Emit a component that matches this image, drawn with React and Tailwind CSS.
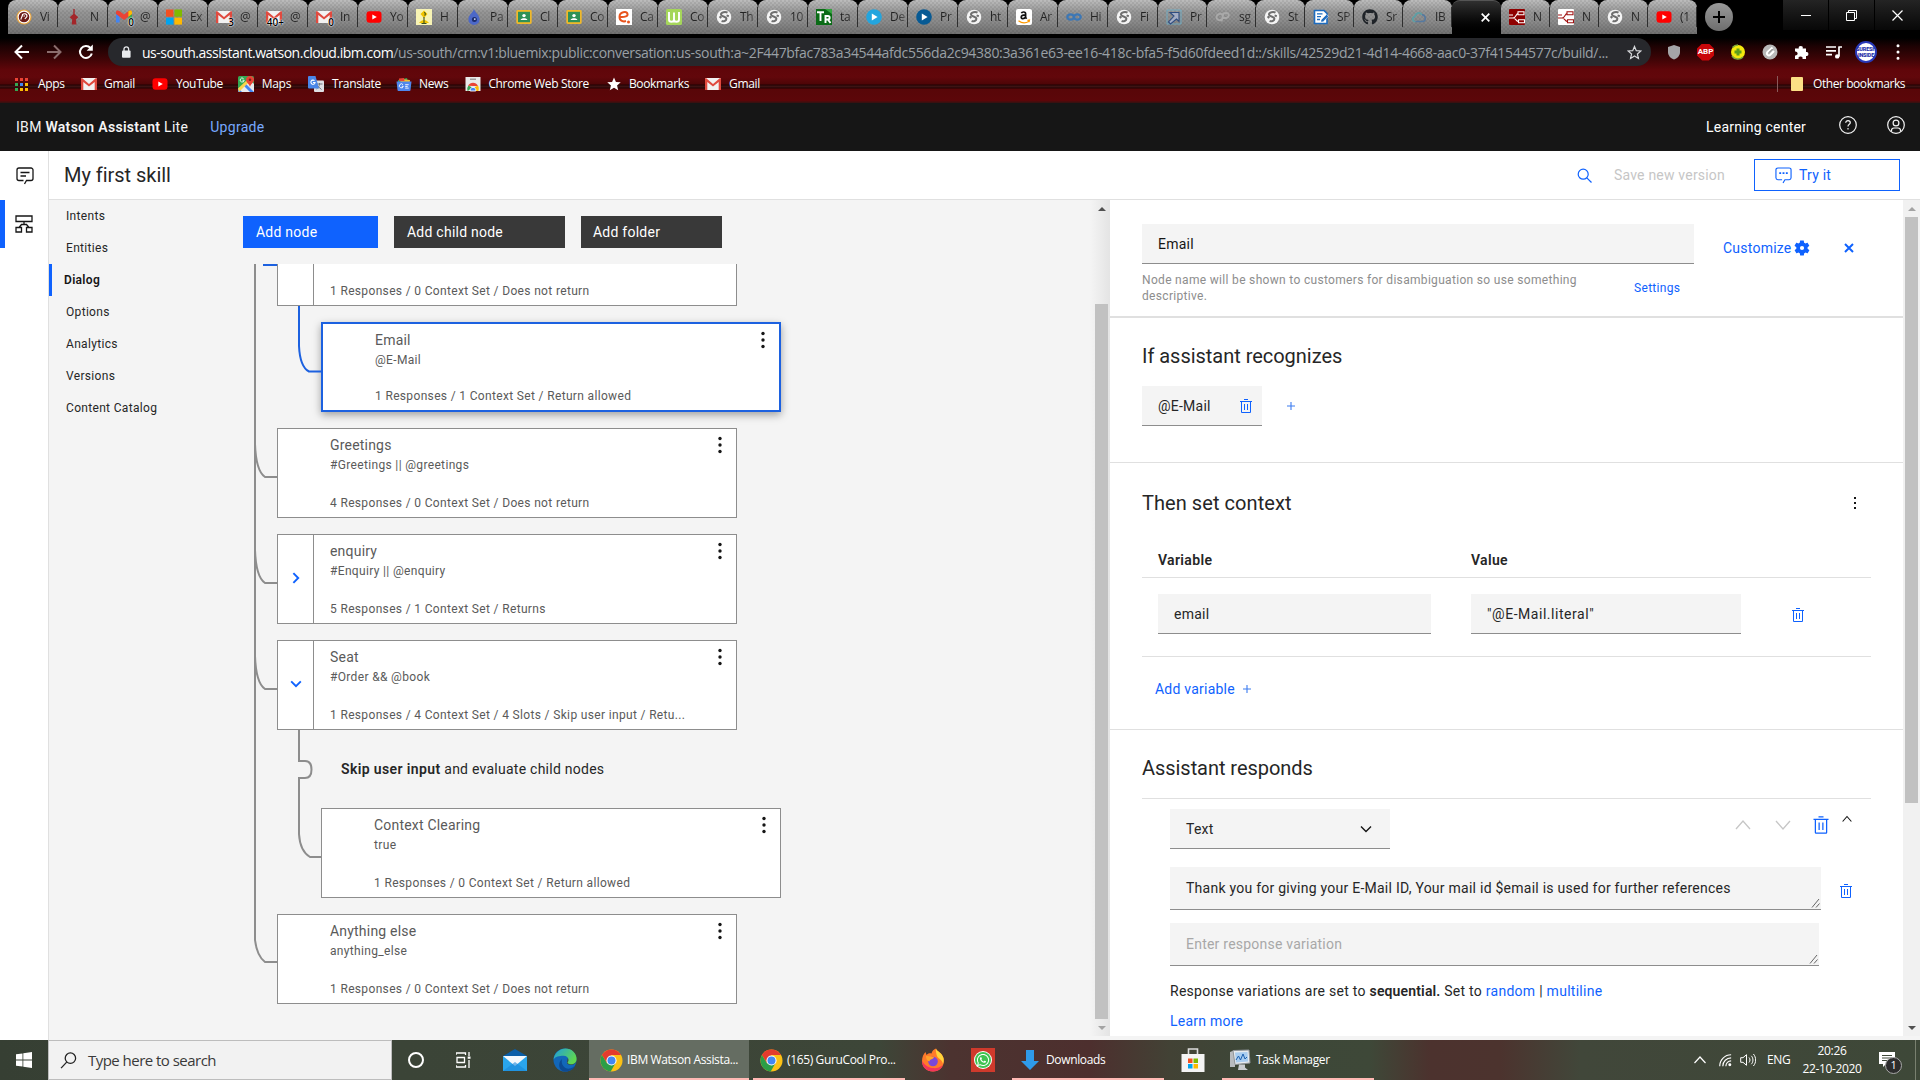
import React from "react";
import { FaGithub, FaWhatsapp } from "react-icons/fa";

/* ---------- favicons ---------- */

const Ico = ({ children, size = 16, box = "0 0 16 16", className = "" }) => (
  <svg width={size} height={size} viewBox={box} className={`shrink-0 ${className}`} fill="none">
    {children}
  </svg>
);

const YouTube = () => (
  <Ico>
    <rect x="0.5" y="2.2" width="15" height="11.6" rx="3" fill="#f00" />
    <path d="M6.3 5.5 L10.8 8 L6.3 10.5Z" fill="#fff" />
  </Ico>
);
const Gmail = () => (
  <Ico>
    <rect x="0" y="2" width="16" height="12" rx="1" fill="#f2f2f2" />
    <path d="M0 3a1 1 0 0 1 1-1l7 6 7-6a1 1 0 0 1 1 1v11h-2.3V6L8 10.6 2.3 6v8H0Z" fill="#e04a3f" />
  </Ico>
);
const GmailColor = () => (
  <Ico>
    <path d="M0 3v10.5h3.6V7Z" fill="#4285f4" />
    <path d="M16 3v10.5h-3.6V7Z" fill="#34a853" />
    <path d="M0 3.2C0 1.5 2 .9 3.4 2L8 5.6 12.6 2c1.4-1.1 3.4-.5 3.4 1.2V5L8 11 0 5Z" fill="#ea4335" />
    <path d="M12.4 2.2c1.6-1.2 3.6-.7 3.6 1V5l-3.6 2.7Z" fill="#fbbc04" />
  </Ico>
);
const Badge = ({ text, children }) => (
  <span className="relative flex">
    {children}
    <span className="absolute right-[-2px] bottom-[-3px] text-[10px] leading-[11px] font-semibold text-black [text-shadow:0_0_2px_#fff,0_0_1px_#fff,0_0_1px_#fff]">
      {text}
    </span>
  </span>
);
const Globe = () => (
  <Ico>
    <circle cx="8" cy="8" r="7.3" fill="#f4f4f4" />
    <path d="M11.5 3.6C9.6 2.4 5 3 5 5.4c0 2.4 5.4 1.8 5.4 4.4 0 2.2-3 3-4.8 2.2M5.2 9.2 3.6 7.4M10.6 6.4l2.2.8" stroke="#6f6f6f" strokeWidth="2" />
  </Ico>
);
const Classroom = () => (
  <Ico>
    <rect x="0.3" y="1" width="15.4" height="14" rx="1.4" fill="#f0b92a" />
    <rect x="2" y="2.8" width="12" height="10.4" fill="#2f9157" />
    <circle cx="8" cy="6.6" r="1.7" fill="#fff" />
    <path d="M4.6 11c.3-2.4 6.5-2.4 6.8 0Z" fill="#fff" />
  </Ico>
);
const Microsoft = () => (
  <Ico>
    <path fill="#f25022" d="M0 .5h7.4v7.2H0z" />
    <path fill="#7fba00" d="M8.4.5H16v7.2H8.4z" />
    <path fill="#00a4ef" d="M0 8.6h7.4v7H0z" />
    <path fill="#ffb900" d="M8.4 8.6H16v7H8.4z" />
  </Ico>
);
const Prosper = () => (
  <Ico>
    <circle cx="8" cy="8" r="7.6" fill="#e8a33b" />
    <circle cx="8" cy="8" r="6.4" fill="#fff" />
    <circle cx="8" cy="8" r="5.3" fill="#6d1c18" />
    <path d="M5 10.5c0-2.500 1.500-2.500 1.500-5 2-1.500 4.500-.5 4.500 1.500 0 1.500-1.500 1.500-2 3M7.500 7h1.500" stroke="#fff" strokeWidth="1.200" />
  </Ico>
);
const Guitar = () => (
  <Ico>
    <path d="M7.3 0h1.4v5l3.6 3.2-2.4 2.4.6 5H5.7l.5-5-2.5-2.4L7.3 5Z" fill="#a3262a" />
  </Ico>
);
const Yellow = () => (
  <Ico>
    <rect width="16" height="16" fill="#f7f3b4" />
    <path d="M8 1.500 11.500 5 8 9 4.500 5Z M3 14c3-4 7-4 10 0Z" fill="#f2c400" />
    <path d="M8 3.500c1.600 0 1.800 1.800.6 3M8 8v6M5.500 14.500h5" stroke="#38511f" strokeWidth="1.100" />
  </Ico>
);
const Drop = () => (
  <Ico>
    <path d="M8 0c1.5 4 5.6 6.2 5.6 10.2A5.6 5.6 0 0 1 8 16a5.6 5.6 0 0 1-5.6-5.8C2.400 6.200 6.500 4 8 0Z" fill="#4c68c8" />
    <circle cx="8.400" cy="10.500" r="2.500" fill="#1c2c6c" />
    <circle cx="8.800" cy="10.100" r="0.900" fill="#dfe6ff" />
  </Ico>
);
const Ece = () => (
  <Ico>
    <rect width="16" height="16" fill="#fff" />
    <path d="M3.500 8c6 .5 8.500-1 8-3C10.800 2 3.500 2.500 3.500 8c0 4 4 5 6.500 4" stroke="#e8541e" strokeWidth="2" />
    <circle cx="12.500" cy="13" r="1.500" fill="#e8541e" />
  </Ico>
);
const Green = () => (
  <Ico>
    <rect width="16" height="16" rx="1.500" fill="#a5d65a" />
    <path d="M3 3v7.500c0 3 5 3 5 0V3.500v7c0 3 5 3 5 0V3" stroke="#fff" strokeWidth="1.900" />
  </Ico>
);
const Tr = () => (
  <Ico>
    <rect width="16" height="16" fill="#0a6b16" />
    <path d="M9 0h7v5z" fill="#35a53f" />
    <path d="M1 3.200h7M4.500 3v9M9.500 14V7h2.500c2.200 0 2.200 3.500 0 3.500H10M12 10.500 14.500 14" stroke="#fff" strokeWidth="1.900" />
  </Ico>
);
const Play = ({ fill }) => (
  <Ico>
    <circle cx="8" cy="8" r="7.800" fill={fill} />
    <path d="M5.800 4.500 11.600 8l-5.800 3.500Z" fill="#fff" />
  </Ico>
);
const Amazon = () => (
  <Ico>
    <rect width="16" height="16" rx="2" fill="#fff" />
    <path d="M5.400 4.300C6 2.500 9.600 2.500 9.600 4.800v3.700l1 1.200M9.400 5.900c-3 0-4.200.8-4.200 2.300 0 2.100 3.300 2 4.200-.2" stroke="#111" strokeWidth="1.700" />
    <path d="M2.500 11.800c3.300 2.500 7.500 2.500 10.600.4M11.400 11.300l2-.2-.4 2" stroke="#f90" strokeWidth="1.300" />
  </Ico>
);
const Infinity = () => (
  <Ico>
    <ellipse cx="4.600" cy="8" rx="3.300" ry="2.700" stroke="#3c77b5" strokeWidth="2.300" />
    <ellipse cx="11.400" cy="8" rx="3.300" ry="2.700" stroke="#3c77b5" strokeWidth="2.300" />
  </Ico>
);
const Share = () => (
  <Ico>
    <path d="M1 1h14v14H1Z" stroke="#69b3cf" strokeWidth="0.800" />
    <path d="M4 3.500h9v9L10.500 10l-6 5-2-2 5.500-6Z" fill="#a4adc4" stroke="#2f4d80" strokeWidth="1.100" />
  </Ico>
);
const Cp = () => (
  <Ico>
    <path d="M7.500 6c-1.500-2-5.600-1.400-6 2-.3 2.800 3 4 5 2.300M6.500 12.500 8.500 4M8.500 4.500c3-1 5.500-.4 5.300 1.900-.2 2.500-3 2.900-5.500 2.400" stroke="#a9a9a9" strokeWidth="1.900" />
  </Ico>
);
const Docs = () => (
  <Ico>
    <path d="M1.500 1.500h9.500l3 3v10H1.500z" fill="#fff" stroke="#1d6cc0" strokeWidth="1.600" />
    <path d="M4 4.800h5.500M4 7.600h4M4 10.500h3" stroke="#1d6cc0" strokeWidth="1.300" />
    <path d="M8 11 13.500 5.500l2 1.800-5.300 5.400-2.200.5Z" fill="#1d6cc0" stroke="#fff" strokeWidth="0.500" />
  </Ico>
);
const Cloud = () => (
  <Ico>
    <path d="M4.500 12.500C1 12.500.8 8 4 7.500 4.500 3.500 9.500 2.800 11 6" stroke="#5c9fa5" strokeWidth="1.700" />
    <path d="M11 6c4-.5 4.500 6.500.5 6.500h-7" stroke="#56799f" strokeWidth="1.700" />
  </Ico>
);
const NodeRed = ({ bg, fg }) => (
  <Ico>
    <rect width="16" height="16" rx="1" fill={bg} />
    <path d="M0 9h4c3 0 3-4.500 5-4.500M4 9c3 0 3 3.500 5.500 3.500M9 2.800h6v3H9zM9.500 10.800h6v3h-6zM0 6h4" stroke={fg} strokeWidth="1.100" />
  </Ico>
);

const TABS = [
  [<Prosper />, "Vi"],
  [<Guitar />, "N"],
  [<Badge text="0"><GmailColor /></Badge>, "@"],
  [<Microsoft />, "Ex"],
  [<Badge text="3"><Gmail /></Badge>, "@"],
  [<Badge text="40+"><Gmail /></Badge>, "@"],
  [<Badge text="0"><Gmail /></Badge>, "In"],
  [<YouTube />, "Yo"],
  [<Yellow />, "H"],
  [<Drop />, "Pa"],
  [<Classroom />, "Cl"],
  [<Classroom />, "Co"],
  [<Ece />, "Ca"],
  [<Green />, "Co"],
  [<Globe />, "Th"],
  [<Globe />, "10"],
  [<Tr />, "ta"],
  [<Play fill="#23a5de" />, "De"],
  [<Play fill="#075a94" />, "Pr"],
  [<Globe />, "ht"],
  [<Amazon />, "Ar"],
  [<Infinity />, "Hi"],
  [<Globe />, "Fi"],
  [<Share />, "Pr"],
  [<Cp />, "sg"],
  [<Globe />, "St"],
  [<Docs />, "SP"],
  [<FaGithub size={16} color="#1f2328" className="shrink-0" />, "Sr"],
  [<Cloud />, "IB"],
];
const TABS_AFTER = [
  [<NodeRed bg="#8f0000" fg="#fff" />, "N"],
  [<NodeRed bg="#fff" fg="#a01010" />, "N"],
  [<Globe />, "N"],
  [<YouTube />, "(1"],
];

function Tab({ icon, label, narrow }) {
  return (
    <div
      className={`${narrow ? "w-[49px]" : "w-[50px]"} flex h-[34px] shrink-0 items-center rounded-t-lg bg-[repeating-conic-gradient(#00000012_0_25%,transparent_0_50%),linear-gradient(#bdbdbd,#969696_35%,#8a8a8a_65%,#707070)] bg-[size:4px_4px,100%_100%] pl-2`}
    >
      {icon}
      <span className="ml-2 w-[17px] overflow-hidden whitespace-nowrap bg-gradient-to-r from-[#1c1c1c] via-[#2b2b2b] to-[#6a6a6a] bg-clip-text text-[12px] leading-4 tracking-[-0.3px] text-transparent">
        {label}
      </span>
      <span className="ml-auto h-5 w-px bg-[#2e2e2e]" />
    </div>
  );
}

/* ---------- browser chrome ---------- */

const BOOKMARKS = [
  { label: "Gmail", ml: "ml-[16px]", gap: "ml-[7px]", icon: <Gmail /> },
  { label: "YouTube", ml: "ml-[17px]", gap: "ml-[8px]", icon: <YouTube /> },
  {
    label: "Maps", ml: "ml-[15px]", gap: "ml-[8px]",
    icon: (
      <Ico>
        <rect width="16" height="16" rx="1.500" fill="#34a853" />
        <path d="M0 16 12 4l4 4v8Z" fill="#e8eaed" />
        <path d="M0 12 4 16H1a1 1 0 0 1-1-1ZM8 8l8 8h-4L6 10Z" fill="#4285f4" />
        <path d="M0 12.500 9 4l2 2L1 16Z" fill="#fbd34c" />
        <path d="M12 0c2.400 0 4 1.700 4 3.800 0 2.500-2.700 3.500-4 7-1.300-3.500-4-4.500-4-7C8 1.700 9.600 0 12 0Z" fill="#ea4335" />
        <circle cx="12" cy="3.800" r="1.300" fill="#7a1f18" />
        <path d="M5.500 2.500a2 2 0 1 0 .7 1.700H4.500" stroke="#fff" strokeWidth="0.900" />
      </Ico>
    ),
  },
  {
    label: "Translate", ml: "ml-[17px]", gap: "ml-[8px]",
    icon: (
      <Ico>
        <rect x="6" y="4.500" width="10" height="11.500" rx="1" fill="#dfe1e5" />
        <path d="M8.500 8h6M11.500 7v1c0 2-1.500 4-3 5M9.500 10l4 3.500" stroke="#6f7680" />
        <path d="M1 0h6.500L11 12.500H1a1 1 0 0 1-1-1V1a1 1 0 0 1 1-1Z" fill="#4a86e8" />
        <path d="M6.500 4.700a2.100 2.100 0 1 0 .6 1.800H5" stroke="#fff" strokeWidth="1.100" />
      </Ico>
    ),
  },
  {
    label: "News", ml: "ml-[15px]", gap: "ml-[7px]",
    icon: (
      <Ico>
        <path d="M2 4 11 2l1 4H2Z" fill="#2e9e57" />
        <path d="m5 3 9 1-.5 4H4Z" fill="#f6c02c" />
        <path d="m3 2.500 5-.5.500 3H3Z" fill="#ea4335" />
        <path d="M0.500 5.500h15L14.500 14a1 1 0 0 1-1 1h-11a1 1 0 0 1-1-1Z" fill="#4f86ec" />
        <path d="M7 8.700a2 2 0 1 0 .3 1.600H5.800M9.200 8.700h3.500M9.200 10.400h2.500M9.200 12.100h3.500" stroke="#fff" strokeWidth="0.900" />
      </Ico>
    ),
  },
  {
    label: "Chrome Web Store", ml: "ml-[17px]", gap: "ml-[7px]",
    icon: (
      <Ico>
        <path d="M0.500 1h15v14h-15z" fill="#e9e9e9" />
        <path d="M5 2.500h6v1.500H5z" fill="#9d9d9d" />
        <path d="M2.500 15a5.500 5.500 0 0 1 1-5.500L8 12Z" fill="#35a853" />
        <path d="M3 9.800c2.200-4 8-4 10 .2H8Z" fill="#ea4335" />
        <path d="M13 9.500c.9 1.500 1 4 .3 5.500H8l2-4Z" fill="#fbbc05" />
        <path d="M5.200 15a2.900 2.900 0 1 1 5.600 0Z" fill="#4285f4" stroke="#fff" strokeWidth="0.900" />
      </Ico>
    ),
  },
  {
    label: "Bookmarks", ml: "ml-[18px]", gap: "ml-[8px]",
    icon: (
      <Ico size={14}>
        <path d="m8 .5 2.200 5.100 5.500.5-4.200 3.600 1.300 5.400L8 12.200l-4.800 2.900 1.300-5.400L.3 6.100l5.500-.5Z" fill="#fff" />
      </Ico>
    ),
  },
  { label: "Gmail", ml: "ml-[16px]", gap: "ml-[8px]", icon: <Gmail /> },
];

const APP_DOTS = ["#ea4335", "#ea4335", "#ea4335", "#34a853", "#4285f4", "#fbbc04", "#34a853", "#fbbc04", "#fbbc04"];

function BrowserChrome() {
  return (
    <header className="h-[103px] shrink-0 bg-[linear-gradient(#000_0px,#000_38px,#1c0203_46px,#3b0406_58px,#60060a_70px,#62070b_77px,#4e0507_84px,#1e0102_85px,#3d1313_86px,#3d1313_87px,#1e0102_88px,#580608_89px,#5c0609_101px,#3a1010_102px)] font-['Open_Sans',sans-serif]">
      <div className="flex h-[34px] pl-2">
        {TABS.map(([icon, label], i) => (
          <Tab key={i} icon={icon} label={label} narrow={i > 22} />
        ))}
        <div className="flex h-[38px] w-[49px] items-center rounded-t-lg border-t border-[#555] bg-gradient-to-b from-[#303030] to-black pb-1 pl-[29px]">
          <Ico size={9} box="0 0 9 9">
            <path d="m.7.7 7.600 7.600M8.300.7.700 8.300" stroke="#fff" strokeWidth="1.700" />
          </Ico>
        </div>
        {TABS_AFTER.map(([icon, label], i) => (
          <Tab key={i} icon={icon} label={label} narrow />
        ))}
        <div className="mt-[3px] ml-[8px] flex size-7 items-center justify-center rounded-full bg-gradient-to-b from-[#9a9a9a] to-[#6e6e6e]">
          <Ico size={12} box="0 0 12 12">
            <path d="M6 0v12M0 6h12" stroke="#000" strokeWidth="2" />
          </Ico>
        </div>
        <div className="ml-auto flex h-[30px] w-[137px] gap-px">
          <div className="flex flex-1 items-center justify-center bg-gradient-to-b from-[#242424] to-[#080808]">
            <span className="h-px w-[10px] bg-white" />
          </div>
          <div className="flex flex-1 items-center justify-center bg-gradient-to-b from-[#242424] to-[#080808]">
            <Ico size={11} box="0 0 11 11">
              <path d="M.5 2.500h8v8h-8zM2.500 2.500v-2h8v8h-2" stroke="#fff" />
            </Ico>
          </div>
          <div className="flex flex-1 items-center justify-center bg-gradient-to-b from-[#242424] to-[#080808]">
            <Ico size={11} box="0 0 11 11">
              <path d="m.5.5 10 10M10.500.5l-10 10" stroke="#fff" strokeWidth="1.200" />
            </Ico>
          </div>
        </div>
      </div>

      <div className="mt-1 flex h-7 items-center">
        <Ico size={16} className="ml-[14px]">
          <path d="M15 8H2M8 1.500 1.500 8 8 14.500" stroke="#fff" strokeWidth="2" />
        </Ico>
        <Ico size={16} className="ml-4">
          <path d="M1 8h13M8 1.500 14.500 8 8 14.500" stroke="#8b6d6d" strokeWidth="2" />
        </Ico>
        <Ico size={16} className="ml-4">
          <path d="M13.800 9.500A6 6 0 1 1 12.500 4" stroke="#fff" strokeWidth="2" />
          <path d="M14.800.5v6.200H8.600Z" fill="#fff" />
        </Ico>
        <div className="ml-[14px] flex h-7 w-[1543px] items-center rounded-full bg-[#27282c]">
          <Ico size={12} box="0 0 12 12" className="ml-3">
            <rect x="2" y="4.600" width="8.600" height="7.200" rx="1" fill="#e8eaed" />
            <path d="M4 5V3.100a2.300 2.300 0 0 1 4.600 0V5" stroke="#e8eaed" strokeWidth="1.300" />
          </Ico>
          <span className="ml-[10px] text-[14px] whitespace-nowrap tracking-[-0.465px] text-white">
            us-south.assistant.watson.cloud.ibm.com
          </span>
          <span className="text-[14px] whitespace-nowrap tracking-[-0.335px] text-[#9aa0a6]">
            /us-south/crn:v1:bluemix:public:conversation:us-south:a~2F447bfac783a34544afdc556da2c94380:3a361e63-ee16-418c-bfa5-f5d60fdeed1d::/skills/42529d21-4d14-4668-aac0-37f41544577c/build/...
          </span>
          <Ico size={15} className="mr-[9px] ml-auto">
            <path d="m8 1.500 1.900 4.500 4.900.4-3.700 3.200 1.100 4.800L8 11.800l-4.200 2.600 1.100-4.800L1.200 6.400 6.100 6Z" stroke="#d5d7da" strokeWidth="1.300" />
          </Ico>
        </div>
        <Ico className="ml-[15px]">
          <path d="M8 1 14 3v5c0 4-3 6.500-6 7.500C5 14.500 2 12 2 8V3Z" fill="#a5a5a8" />
        </Ico>
        <span className="ml-[15px] flex size-[17px] items-center justify-center bg-[#c9070a] font-['Roboto'] text-[8px] font-bold text-white [clip-path:polygon(30%_0,70%_0,100%_30%,100%_70%,70%_100%,30%_100%,0_70%,0_30%)]">
          ABP
        </span>
        <Ico className="ml-4">
          <circle cx="8" cy="8" r="7" fill="#f3e90e" />
          <path d="M2 12A7.200 7.200 0 0 0 13 13M2.500 3.500A7 7 0 0 1 8 .9" stroke="#7da63c" strokeWidth="1.500" />
          <path d="M8 4.500v7M4.500 8h7" stroke="#5d9e1c" strokeWidth="3" />
        </Ico>
        <Ico className="ml-4">
          <circle cx="8" cy="8" r="7.500" fill="#b9b9b9" />
          <path d="M10.500 3.500 5.500 8c-2 2.200 1 4.500 2.800 2.800L12 7" stroke="#fff" strokeWidth="2" />
          <path d="M10.500 5 7 8.500" stroke="#7b7b7b" />
        </Ico>
        <Ico className="ml-4">
          <path d="M1 4.500h3.800a2 2 0 1 1 3.900 0H12v3.600a2 2 0 1 1 0 3.900v3H8.500a2 2 0 1 0-3.900 0H1v-3.600a2 2 0 1 0 0-3.800Z" fill="#fff" />
        </Ico>
        <Ico className="ml-4">
          <path d="M0 3h10M0 6.800h10M0 10.600h6M13 3v9.500M12.300 3H16" stroke="#fff" strokeWidth="1.700" />
          <circle cx="11.200" cy="12.400" r="2.200" fill="#fff" />
        </Ico>
        <span className="ml-[13px] flex size-[22px] items-center justify-center rounded-full border-2 border-[#2838b8] bg-white">
          <span className="text-center font-['Roboto'] text-[5.500px] leading-[6px] font-black tracking-[-0.2px] text-[#1f2fa8]">
            SURESH
            <br />
            INSIDE
          </span>
        </span>
        <Ico className="ml-[13px]">
          <path d="M8 1.800h0M8 8h0M8 14.200h0" stroke="#fff" strokeWidth="3" strokeLinecap="round" />
        </Ico>
      </div>

      <div className="flex h-9 items-center text-[12px] tracking-[-0.34px] text-white">
        <div className="ml-[15px] grid grid-cols-3 gap-[2px]">
          {APP_DOTS.map((c, i) => (
            <span key={i} className="size-[3px]" style={{ backgroundColor: c }} />
          ))}
        </div>
        <span className="ml-[10px] w-[27px]">Apps</span>
        {BOOKMARKS.map((b, i) => (
          <span key={i} className={`flex items-center whitespace-nowrap ${b.ml}`}>
            {b.icon}
            <span className={b.gap}>{b.label}</span>
          </span>
        ))}
        <span className="ml-auto h-4 w-px bg-[#8a5a5b]" />
        <span className="ml-[13px] h-[14px] w-3 rounded-[1px] bg-[#fbdf85]" />
        <span className="mr-[14px] ml-[10px] w-[93px] whitespace-nowrap tracking-[-0.43px]">Other bookmarks</span>
      </div>
    </header>
  );
}

/* ---------- shared app pieces ---------- */

const Trash = ({ size = 16, className = "" }) => (
  <svg width={size} height={size} viewBox="0 0 32 32" fill="#0f62fe" className={`shrink-0 ${className}`}>
    <path d="M12 12h2v12h-2zM18 12h2v12h-2z" />
    <path d="M4 6v2h2v20a2 2 0 0 0 2 2h16a2 2 0 0 0 2-2V8h2V6Zm4 22V8h16v20ZM12 2h8v2h-8z" />
  </svg>
);
const Plus = () => (
  <Ico size={8} box="0 0 8 8">
    <path d="M4 0v8M0 4h8" stroke="#3d7cf0" strokeWidth="1.100" />
  </Ico>
);
const Chev = ({ d, color, size = 16, w = 1.400, className = "" }) => (
  <Ico size={size} className={className}>
    <path d={d} stroke={color} strokeWidth={w} />
  </Ico>
);
const Kebab = ({ className = "" }) => (
  <svg width="6" height="20" viewBox="0 0 6 20" className={className} fill="#161616">
    <circle cx="3" cy="3.500" r="1.700" />
    <circle cx="3" cy="10" r="1.700" />
    <circle cx="3" cy="16.500" r="1.700" />
  </svg>
);
const Grip = () => (
  <svg width="9" height="10" viewBox="0 0 9 10" className="mb-px ml-auto self-end" stroke="#555" strokeWidth="0.900">
    <path d="M1 9.500 8 1M5 9.500 8.500 5.500" />
  </svg>
);
const ScrollBar = ({ top, thumb, up, down, className = "" }) => (
  <div className={`flex shrink-0 flex-col items-center ${className}`}>
    <div className="flex h-[17px] items-center">
      <Ico size={8} box="0 0 8 8"><path d="M0 6 4 2l4 4Z" fill={up} /></Ico>
    </div>
    <div className={`w-[13px] bg-[#c1c1c1] ${top} ${thumb}`} />
    <div className="mt-auto flex h-[17px] items-center">
      <Ico size={8} box="0 0 8 8"><path d="M0 2l4 4 4-4Z" fill={down} /></Ico>
    </div>
  </div>
);

/* ---------- dialog tree ---------- */

function Node({ title, cond, meta, toggle, child, selected }) {
  return (
    <div
      className={`flex h-[90px] w-[460px] shrink-0 bg-white ${child ? "ml-[78px]" : "ml-[34px]"} ${
        selected ? "border-2 border-[#1c61e0] shadow-[0_3px_8px_rgba(0,0,0,0.35)]" : "border border-[#8d8d8d]"
      }`}
    >
      <div className={`flex w-9 shrink-0 items-center justify-center pb-[3px] ${toggle ? "border-r border-[#8d8d8d]" : ""}`}>
        {toggle === "right" && <Chev size={14} d="m5 2.500 5.500 5.500-5.500 5.500" color="#0f62fe" w={2.200} />}
        {toggle === "down" && <Chev size={14} d="m2.500 5 5.500 5.500 5.500-5.500" color="#0f62fe" w={2.200} />}
      </div>
      <div className="flex-1 pt-1.5 pl-4 text-[12px] leading-5 tracking-[0.34px] text-[#5a5a5a]">
        <div className="text-[14px] tracking-[0.2px]">{title}</div>
        <div>{cond}</div>
        <div className={selected ? "mt-4" : "mt-[18px]"}>{meta}</div>
      </div>
      <Kebab className={`mt-1.5 ${selected ? "mr-[13px]" : "mr-[13.500px]"}`} />
    </div>
  );
}

function DialogTree() {
  return (
    <div className="relative flex h-[776px] flex-col gap-4 overflow-hidden">
      <svg className="absolute top-0 left-0" width="90" height="776" fill="none" stroke="#8d8d8d" strokeWidth="2">
        <path d="M12 0V676Q14 692 22 698H34" />
        <path d="M12 180Q13 207 22 213H34M12 286Q13 313 22 319H34M12 392Q13 419 22 425H34" />
        <path d="M56 466V497H62Q68.500 497 68.500 505.500Q68.500 514 62 514H56V570Q57 587 67 593H78" />
        <path d="M20 0.500H34" stroke="#1c61e0" strokeWidth="3" />
        <path d="M56 42V82Q57 103 66 107.500H78" stroke="#1c61e0" />
      </svg>
      <div className="ml-[34px] flex h-[42px] w-[460px] shrink-0 border border-t-0 border-[#8d8d8d] bg-white">
        <div className="w-9 border-r border-[#8d8d8d]" />
        <div className="pt-[17px] pl-4 text-[12px] leading-5 tracking-[0.34px] text-[#5a5a5a]">
          1 Responses / 0 Context Set / Does not return
        </div>
      </div>
      <Node child selected title="Email" cond="@E-Mail" meta="1 Responses / 1 Context Set / Return allowed" />
      <Node title="Greetings" cond="#Greetings || @greetings" meta="4 Responses / 0 Context Set / Does not return" />
      <Node toggle="right" title="enquiry" cond="#Enquiry || @enquiry" meta="5 Responses / 1 Context Set / Returns" />
      <Node toggle="down" title="Seat" cond="#Order && @book" meta="1 Responses / 4 Context Set / 4 Slots / Skip user input / Retu..." />
      <div className="ml-[98px] h-[46px] text-[14px] leading-[46px] tracking-[0.25px]">
        <b className="font-semibold tracking-[0.38px]">Skip user input</b> and evaluate child nodes
      </div>
      <Node child title="Context Clearing" cond="true" meta="1 Responses / 0 Context Set / Return allowed" />
      <Node title="Anything else" cond="anything_else" meta="1 Responses / 0 Context Set / Does not return" />
    </div>
  );
}

/* ---------- node editor ---------- */

const field = "flex items-center border-b border-[#8d8d8d] bg-[#f4f4f4] px-4 pt-px";

function Editor() {
  return (
    <div className="h-[836px] w-[793px] shrink-0 bg-white text-[14px] tracking-[0.23px]">
      <section className="h-[118px] border-b-2 border-[#e0e0e0] px-8 pt-6">
        <div className="flex text-[#0f62fe]">
          <div className={`${field} h-10 w-[552px] text-[#161616]`}>Email</div>
          <div className="mt-2 ml-[29px] flex h-8 items-center">
            <span className="w-[68px]">Customize</span>
            <svg width="18" height="18" viewBox="0 0 24 24" className="ml-[2px]" fill="#0f62fe">
              <path d="M19.400 13c0-.3.100-.6.100-1s0-.7-.1-1l2.100-1.600c.2-.2.300-.4.100-.7l-2-3.400c-.1-.2-.4-.3-.6-.2l-2.500 1c-.5-.4-1.100-.7-1.700-1L14.400 2.400c0-.2-.2-.4-.5-.4h-4c-.2 0-.4.200-.5.4L9 5.100c-.6.2-1.200.6-1.700 1l-2.500-1c-.2-.1-.5 0-.6.200l-2 3.400c-.1.200-.1.500.1.700L4.500 11c0 .3-.1.600-.1 1s0 .7.100 1l-2.100 1.600c-.2.200-.3.400-.1.700l2 3.400c.1.200.4.300.6.200l2.500-1c.5.400 1.100.7 1.700 1l.4 2.700c0 .2.200.4.5.4h4c.2 0 .4-.2.500-.4l.4-2.700c.6-.2 1.200-.6 1.700-1l2.500 1c.2.100.5 0 .6-.2l2-3.400c.1-.2.100-.5-.1-.7ZM12 14.800A2.800 2.800 0 1 1 12 9.200a2.800 2.800 0 0 1 0 5.600Z" />
            </svg>
            <Ico size={10} box="0 0 10 10" className="ml-[33px]">
              <path d="m1 1 8 8M9 1 1 9" stroke="#0f62fe" strokeWidth="2" />
            </Ico>
          </div>
        </div>
        <div className="mt-2 flex items-center text-[12px] leading-4 tracking-[0.32px]">
          <p className="w-[492px] text-[#8d8d8d]">
            Node name will be shown to customers for disambiguation so use something
            <br />
            descriptive.
          </p>
          <span className="text-[#0f62fe]">Settings</span>
        </div>
      </section>

      <section className="h-[145px] border-b border-[#e0e0e0] px-8 pt-6">
        <h2 className="text-[20px] leading-7 tracking-[-0.03px]">If assistant recognizes</h2>
        <div className="mt-4 flex items-center gap-[25px]">
          <div className={`${field} h-10 w-[120px] justify-between pr-2`}>
            @E-Mail
            <Trash />
          </div>
          <Plus />
        </div>
      </section>

      <section className="h-[267px] border-b border-[#e0e0e0] px-8 pt-[26px]">
        <div className="flex items-center justify-between pr-[13px]">
          <h2 className="text-[20px] leading-7 tracking-[0.06px]">Then set context</h2>
          <svg width="6" height="12" fill="#161616"><path d="M2 0h2v2H2zM2 5h2v2H2zM2 10h2v2H2z" /></svg>
        </div>
        <div className="mt-7 flex h-[33px] w-[729px] items-center border-b border-[#e0e0e0] pb-px pl-4 font-semibold tracking-[0.34px]">
          <span className="w-[313px]">Variable</span>
          <span>Value</span>
        </div>
        <div className="flex h-[79px] w-[729px] border-b border-[#e0e0e0] pt-4 pl-4">
          <div className={`${field} h-10 w-[273px]`}>email</div>
          <div className={`${field} ml-10 h-10 w-[270px] tracking-[0.54px]`}>"@E-Mail.literal"</div>
          <Trash className="mt-[13px] ml-[49px]" />
        </div>
        <div className="mt-[22px] ml-[13px] flex items-center gap-2 leading-5 text-[#0f62fe]">
          Add variable
          <Plus />
        </div>
      </section>

      <section className="px-8 pt-6">
        <h2 className="text-[20px] leading-7 tracking-[-0.05px]">Assistant responds</h2>
        <div className="mt-4 w-[729px] border-t border-[#e0e0e0] pt-[10px] pl-7">
          <div className="flex">
            <div className={`${field} h-10 w-[220px] justify-between`}>
              Text
              <Chev size={16} d="m3 5.500 5 5 5-5" color="#161616" />
            </div>
            <div className="ml-[345px] flex h-8 items-center">
              <Chev d="m1 12 7-8 7 8" color="#c6c6c6" w={1.300} />
              <Chev className="ml-6" d="m1 4 7 8 7-8" color="#c6c6c6" w={1.300} />
              <Trash size={20} className="ml-5" />
              <Chev size={10} className="mb-3 ml-[11px]" d="m1 12 7-8 7 8" color="#161616" w={1.800} />
            </div>
          </div>
          <div className="mt-[18px] flex items-center">
            <div className={`${field} h-[43px] w-[651px] pr-px`}>
              <span className="whitespace-nowrap tracking-[0.25px]">
                Thank you for giving your E-Mail ID, Your mail id $email is used for further references
              </span>
              <Grip />
            </div>
            <Trash className="mt-[5px] ml-[17px]" />
          </div>
          <div className={`${field} mt-[13px] h-[43px] w-[649px] pr-px text-[#a8a8a8]`}>
            Enter response variation
            <Grip />
          </div>
          <p className="mt-[15px] leading-5 tracking-[0.27px]">
            Response variations are set to <b className="font-semibold tracking-[0.15px]">sequential.</b> Set to{" "}
            <span className="text-[#0f62fe]">random</span> | <span className="text-[#0f62fe]">multiline</span>
          </p>
          <p className="mt-[10px] leading-5 text-[#0f62fe]">Learn more</p>
        </div>
      </section>
    </div>
  );
}

/* ---------- taskbar ---------- */

const ChromeLogo = () => (
  <Ico size={23} box="0 0 24 24">
    <circle cx="12" cy="12" r="11.500" fill="#fbc116" />
    <path d="M2 6.300A11.500 11.500 0 0 1 12 .5a11.500 11.500 0 0 1 10 5.800H12l-4.800 8.400Z" fill="#e33b2e" />
    <path d="M2 6.300a11.500 11.500 0 0 0 9.200 17.200l5-8.800-8.900.2Z" fill="#2b9e47" />
    <circle cx="12" cy="12" r="5.300" fill="#fff" />
    <circle cx="12" cy="12" r="4.200" fill="#4387f3" />
  </Ico>
);

function Task({ icon, label, active, width = "w-[152px]" }) {
  return (
    <div className={`flex h-10 shrink-0 items-center border-b-2 border-[#ffb9b4] pt-0.5 ${width} ${active ? "bg-[#656d62] pl-[10px]" : "pl-[6px]"}`}>
      <span className="flex w-[24px] justify-center">{icon}</span>
      <span className="ml-[4px] whitespace-nowrap">{label}</span>
    </div>
  );
}

function Taskbar() {
  return (
    <footer className="flex h-10 shrink-0 bg-[linear-gradient(90deg,#363f33_0px,#3b4437_400px,#3d4638_880px,#4c3330_950px,#4d2f2e_1090px,#424235_1170px,#3d4738_1250px,#3e4838_1370px,#4c322e_1430px,#4c332e_1500px,#41473a_1580px,#3e4838_1920px)] font-['Open_Sans',sans-serif] text-[12px] tracking-[-0.36px] text-white">
      <div className="flex w-12 items-center justify-center">
        <Ico><path d="M0 2.300 6.500 1.400v6.200H0ZM7.300 1.300 16 0v7.600H7.300ZM0 8.400h6.500v6.200L0 13.700ZM7.300 8.400H16V16l-8.700-1.300Z" fill="#fff" /></Ico>
      </div>
      <div className="flex w-[344px] items-center border border-[#bdbdbd] bg-[#f2f2f2] text-[15px] tracking-[-0.53px] text-[#3a3a3a]">
        <Ico size={17} className="ml-[11px]">
          <circle cx="9.800" cy="5.800" r="4.900" stroke="#222" strokeWidth="1.200" />
          <path d="M6.300 9.500 1 15.200" stroke="#222" strokeWidth="1.200" />
        </Ico>
        <span className="ml-[11px]">Type here to search</span>
      </div>
      <div className="flex w-12 items-center justify-center">
        <span className="size-4 rounded-full border-2 border-white" />
      </div>
      <div className="flex w-12 items-center justify-center">
        <Ico><path d="M0 3V1h9.500v2M1 5.500h7.500v5H1zM0 13v2h9.500v-2M13 0v4M13 8v8" stroke="#fff" strokeWidth="1.300" /><path d="M11.700 4.500h2.800v2.300h-2.800z" fill="#fff" /></Ico>
      </div>
      <div className="flex w-[53px] items-center justify-center">
        <svg width="24" height="22" viewBox="0 0 24 22"><path d="M0 7 12 0l12 7v8H0Z" fill="#0a5ea8" /><path d="M0 7h24v15H0Z" fill="#2aa5ec" /><path d="M0 7h24L12 17Z" fill="#f3f8fc" /><path d="M0 22 12 13l12 9Z" fill="#1b87d8" opacity="0.600" /></svg>
      </div>
      <div className="flex w-12 items-center justify-center">
        <Ico size={24} box="0 0 24 24">
          <defs>
            <linearGradient id="edgeTop" x1="0" y1="0" x2="1" y2="0.500"><stop stopColor="#1e9ee0" /><stop offset="1" stopColor="#5fd650" /></linearGradient>
          </defs>
          <circle cx="12" cy="12" r="11.500" fill="#1267b9" />
          <path d="M12.500 10.500h11c.5 4-2 6.300-5.500 6.300-2.500 0-4-.9-4-1.900 0-.8.500-2 .5-4.400Z" fill="#3d4638" />
          <path d="M.6 11.500C1.500 4.500 7 .5 12.500.5 19 .5 23.600 5.500 23.600 11c0 3.500-2.600 5.300-5.300 5.300-2 0-3.800-.6-3.800-1.500 0-.7 1-1.200 1-2.800 0-2.300-2-4.200-5-4.200C6 7.800 2.500 8.500.6 11.500Z" fill="url(#edgeTop)" />
          <path d="M9 11c-1.500 6 3 10.500 8 9.500 2-.4 3.500-1.300 4.500-2.500 1 1-3.500 5.800-9.500 5.600C6 23.400 4 15.500 9 11Z" fill="#0c4a93" />
        </Ico>
      </div>
      <Task active width="w-[160px]" icon={<ChromeLogo />} label="IBM Watson Assista..." />
      <div className="w-1" />
      <Task icon={<ChromeLogo />} label="(165) GuruCool Pro..." />
      <div className="flex w-14 items-center justify-center">
        <Ico size={24} box="0 0 24 24">
          <path d="M12 23.500C5.500 23.500 1 19 1 13c0-4 1.500-7 3.500-9l1 3C7 5 9 5 10.500 5.500 11 3 13 1 15 .5c.5 3 6 4 7.500 9.500C24.500 17 19 23.500 12 23.500Z" fill="#ff7a2a" />
          <path d="M1 13c0 6 4.500 10.500 11 10.500 5 0 8.500-2.800 10-6.500-4 3-7 3.500-10.500 3C6 19.500 2.500 15.500 1 13Z" fill="#f2365b" />
          <path d="M15 .5c.5 3 6 4 7.500 9.500.4 2 .2 4-.5 6-1-5-5-5-6-8-.7-2.500-1.500-5-1-7.500Z" fill="#ffd43a" />
          <circle cx="12" cy="13.500" r="4.800" fill="#7a47d8" />
          <path d="M5 8c3-.5 5 1 8 1-1 3-4 1.500-4.500 4.500C6 13 5 11 5 8Z" fill="#ffa32b" />
        </Ico>
      </div>
      <div className="flex w-[51px] items-center pl-[10px]">
        <span className="flex size-6 items-center justify-center bg-[#cf3a2c]">
          <span className="flex size-[16px] items-center justify-center rounded-full bg-[#3fc351] ring-1 ring-white"><FaWhatsapp size={14} /></span>
        </span>
      </div>
      <Task
        label="Downloads"
        icon={<svg width="18" height="20" viewBox="0 0 18 20" fill="#2f9bea"><path d="M5 0h8v11h5l-9 9-9-9h5Z" /></svg>}
      />
      <div className="flex w-[58px] items-center justify-center">
        <svg width="24" height="24" viewBox="0 0 24 24" fill="none">
          <path d="M7.500 7V1h9v6" stroke="#dcdcdc" strokeWidth="1.600" />
          <path d="M.5 6h23v18H.5z" fill="#f4f4f4" />
          <path d="M7 10.500h4.500V15H7z" fill="#f25022" /><path d="M12.500 10.500H17V15h-4.500z" fill="#7fba00" />
          <path d="M7 16h4.500v4.500H7z" fill="#00a4ef" /><path d="M12.500 16H17v4.500h-4.500z" fill="#ffb900" />
        </svg>
      </div>
      <Task
        label="Task Manager"
        icon={
          <svg width="22" height="22" viewBox="0 0 22 22" fill="none">
            <path d="M1 3 6 1v17H1Z" fill="#b9bcc0" />
            <path d="M4 1.500 20 1l1 13-15 1.500Z" fill="#e8ebee" stroke="#8f9499" />
            <path d="M6 3.500 18.500 3l.7 9.500L7 13.500Z" fill="#a9cdf0" />
            <path d="m7 11 2.500-4 2 4 2.500-6 2 5 2-2" stroke="#1c5fae" />
            <path d="M10 15.500h6v3l3 2.500H9Z" fill="#c9ccd0" />
          </svg>
        }
      />
      <div className="ml-auto flex items-center">
        <Ico size={12} box="0 0 12 12"><path d="m.5 9 5.500-6 5.500 6" stroke="#fff" strokeWidth="1.200" /></Ico>
        <Ico size={14} className="ml-3">
          <path d="M2 15A13 13 0 0 1 15 2M5.500 15A9.500 9.500 0 0 1 15 5.500M9 15a6 6 0 0 1 6-6" stroke="#fff" strokeWidth="1.300" />
          <circle cx="13.500" cy="13.500" r="1.700" fill="#fff" />
        </Ico>
        <Ico size={16} className="ml-2">
          <path d="M.7 5.700H3l3.500-3v10.600L3 10.300H.7ZM9 5.500c1.300 1.500 1.300 3.500 0 5M11.300 3.800c2.200 2.500 2.200 6 0 8.400M13.400 2c3 3.500 3 8.500 0 12" stroke="#fff" />
        </Ico>
        <span className="ml-[11px] w-[24px]">ENG</span>
        <div className="ml-[11px] w-[60px] text-center leading-[18px] whitespace-nowrap">
          20:26
          <br />
          22-10-2020
        </div>
        <span className="relative ml-[16px] flex">
          <Ico size={18} box="0 0 18 18">
            <path d="M1 1h16v12H8l-3 3v-3H1Z" fill="#fff" />
            <path d="M4 4.500h10M4 7h10M4 9.500h6" stroke="#3e4838" />
          </Ico>
          <span className="absolute top-[6px] left-[7px] flex size-[17px] items-center justify-center rounded-full border border-[#a9a9a9] bg-[#2d2d2d] text-[11px]">1</span>
        </span>
        <span className="mr-1 ml-[19px] h-10 w-px bg-[#79806f]" />
      </div>
    </footer>
  );
}

/* ---------- page ---------- */

const NAV = ["Intents", "Entities", "Dialog", "Options", "Analytics", "Versions", "Content Catalog"];

export default function App() {
  return (
    <div className="flex h-[1080px] w-[1920px] flex-col overflow-hidden bg-[#f4f4f4] font-['Roboto',sans-serif] text-[#262626]">
      <BrowserChrome />

      <div className="flex h-12 shrink-0 items-center bg-[#161616] px-4 pt-px text-[14px] tracking-[0.3px] text-[#f4f4f4]">
        <span className="whitespace-nowrap">
          IBM <b className="font-semibold">Watson Assistant</b> Lite
        </span>
        <span className="ml-[22px] text-[#78a9ff]">Upgrade</span>
        <span className="ml-auto w-[101px] whitespace-nowrap tracking-[0.22px] text-white">Learning center</span>
        <svg width="18" height="18" viewBox="0 0 18 18" fill="none" stroke="#f4f4f4" strokeWidth="1.200" className="mb-[5px] ml-[32px]">
          <circle cx="9" cy="9" r="8.300" />
          <path d="M6.700 6.800c0-3 4.600-3 4.600 0 0 1.600-2.300 1.500-2.300 3.700M9 12v1.500" />
        </svg>
        <svg width="18" height="18" viewBox="0 0 18 18" fill="none" stroke="#f4f4f4" strokeWidth="1.200" className="mr-[-1px] mb-[5px] ml-[30px]">
          <circle cx="9" cy="9" r="8.300" />
          <circle cx="9" cy="7" r="2.900" />
          <path d="M4.500 15.500v-1c0-1.700 1-2.500 2.500-2.500h4c1.500 0 2.500.8 2.500 2.500v1" />
        </svg>
      </div>

      <div className="flex h-[889px] shrink-0">
        <aside className="w-[49px] shrink-0 border-r border-[#e0e0e0] bg-white">
          <div className="flex h-[49px] items-center pl-4">
            <svg width="18" height="18" viewBox="0 0 18 18" fill="none" stroke="#161616" strokeWidth="1.300">
              <path d="M8.500 17 10.500 13.500H15a2 2 0 0 0 2-2V3a2 2 0 0 0-2-2H3a2 2 0 0 0-2 2v8.500a2 2 0 0 0 2 2h4.500M4.500 5.500h9M4.500 9h5.500" />
            </svg>
          </div>
          <div className="flex h-12 items-center border-l-[5px] border-[#0f62fe] pb-px pl-[10px]">
            <svg width="18" height="18" viewBox="0 0 18 18" fill="none" stroke="#161616" strokeWidth="1.300">
              <path d="M1 1h16v5.500H1zM1 12.500h5.500V17H1zM11.500 12.500H17V17h-5.500zM9 6.500V9.500M4 12.500l2.500-3h5l2.500 3" />
            </svg>
          </div>
        </aside>

        <div className="flex min-w-0 flex-1 flex-col">
          <div className="flex h-[49px] shrink-0 items-center border-b border-[#e0e0e0] bg-white pl-[15px] text-[14px]">
            <h1 className="text-[20px] tracking-[-0.03px]">My first skill</h1>
            <svg width="15" height="15" viewBox="0 0 15 15" fill="none" stroke="#0f62fe" strokeWidth="1.200" className="ml-auto">
              <circle cx="6.200" cy="6.200" r="5" />
              <path d="m9.800 9.800 4.700 4.700" />
            </svg>
            <span className="ml-[22px] w-[112px] tracking-[0.2px] whitespace-nowrap text-[#c6c6c6]">Save new version</span>
            <div className="mr-5 ml-[28px] flex h-8 w-[146px] items-center border border-[#0f62fe] pl-5 tracking-[0.22px] text-[#0f62fe]">
              <svg width="17" height="17" viewBox="0 0 18 18" fill="none" stroke="#0f62fe" strokeWidth="1.200" className="mr-[7px]">
                <path d="M8.500 17 10.500 13.500H15a2 2 0 0 0 2-2V3a2 2 0 0 0-2-2H3a2 2 0 0 0-2 2v8.500a2 2 0 0 0 2 2h4.500" />
                <path d="M4.500 6.500h2M8 6.500h2M11.500 6.500h2" strokeWidth="1.800" />
              </svg>
              Try it
            </div>
          </div>

          <div className="flex min-h-0 flex-1">
            <nav className="w-[194px] shrink-0 text-[12px] tracking-[0.32px]">
              {NAV.map((n) =>
                n === "Dialog" ? (
                  <div key={n} className="flex h-8 items-center border-l-[3px] border-[#0f62fe] pl-3 font-semibold text-[#161616]">{n}</div>
                ) : (
                  <div key={n} className="flex h-8 items-center pl-[17px]">{n}</div>
                )
              )}
            </nav>
            <div className="w-[847px] shrink-0 pt-4">
              <div className="mb-4 flex h-8 text-[14px] leading-8 tracking-[0.24px] text-white">
                <div className="w-[135px] bg-[#0f62fe] pl-[13px]">Add node</div>
                <div className="ml-4 w-[171px] bg-[#393939] pl-[13px]">Add child node</div>
                <div className="ml-4 w-[141px] bg-[#393939] pl-3">Add folder</div>
              </div>
              <DialogTree />
            </div>
            <div className="flex h-[836px] w-5 shrink-0 bg-gradient-to-r from-[#f4f4f4] to-[#e4e4e4] pl-[5px]">
              <ScrollBar className="w-[13px]" top="mt-[87px]" thumb="h-[715px]" up="#505050" down="#a3a3a3" />
            </div>
            <Editor />
            <ScrollBar className="h-[836px] w-[17px] bg-[#f1f1f1]" top="mt-0" thumb="h-[586px]" up="#a3a3a3" down="#505050" />
          </div>
        </div>
      </div>
      <Taskbar />
    </div>
  );
}
